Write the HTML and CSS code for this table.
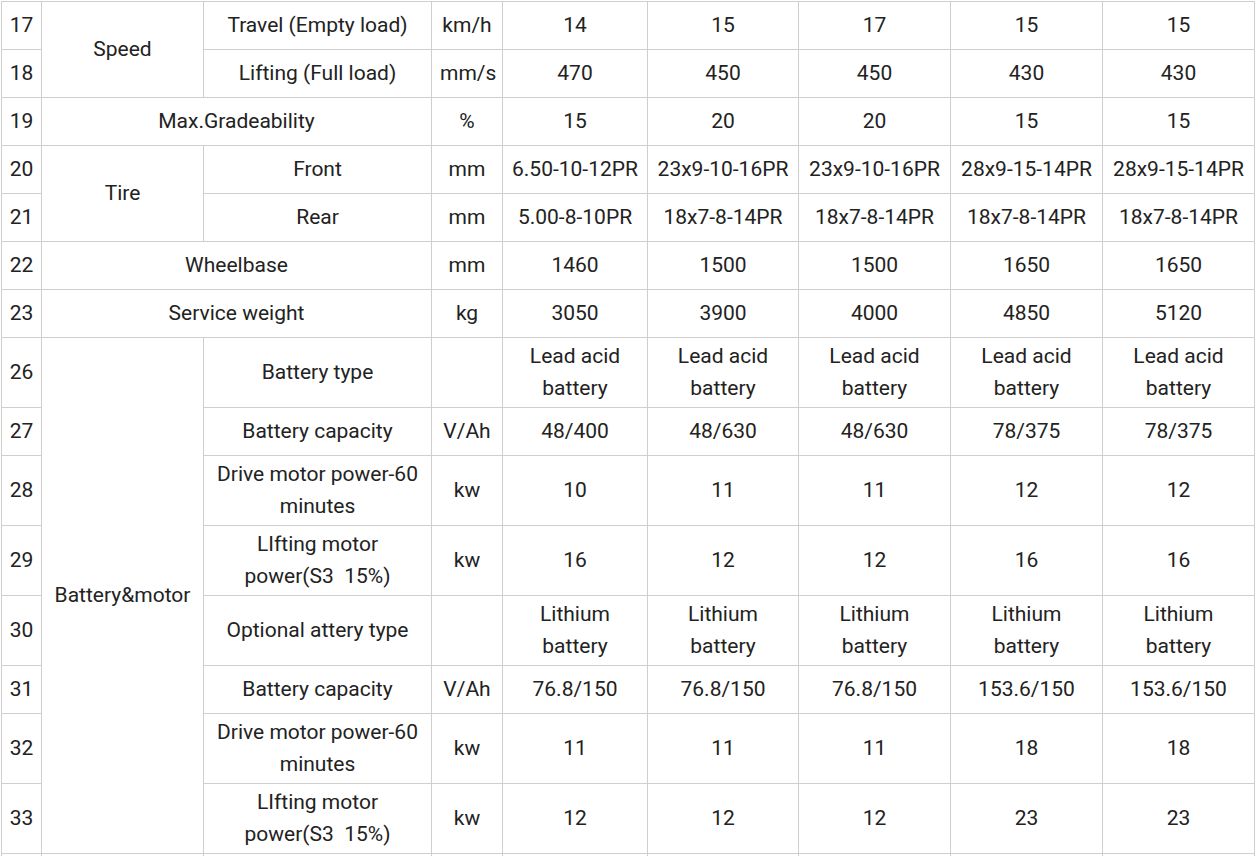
FILE: index.html
```html
<!DOCTYPE html>
<html>
<head>
<meta charset="utf-8">
<link rel="stylesheet" href="styles.css">
</head>
<body>
<table class="spec">
<colgroup>
<col class="c-no"><col class="c-grp"><col class="c-item"><col class="c-unit">
<col class="c-v1"><col class="c-v2"><col class="c-v"><col class="c-v"><col class="c-v">
</colgroup>
<tbody>
<tr><td>17</td><td rowspan="2">Speed</td><td>Travel (Empty load)</td><td>km/h</td><td>14</td><td>15</td><td>17</td><td>15</td><td>15</td></tr>
<tr><td>18</td><td>Lifting (Full load)</td><td>mm/s</td><td>470</td><td>450</td><td>450</td><td>430</td><td>430</td></tr>
<tr><td>19</td><td colspan="2">Max.Gradeability</td><td>%</td><td>15</td><td>20</td><td>20</td><td>15</td><td>15</td></tr>
<tr><td>20</td><td rowspan="2">Tire</td><td>Front</td><td>mm</td><td>6.50-10-12PR</td><td>23x9-10-16PR</td><td>23x9-10-16PR</td><td>28x9-15-14PR</td><td>28x9-15-14PR</td></tr>
<tr><td>21</td><td>Rear</td><td>mm</td><td>5.00-8-10PR</td><td>18x7-8-14PR</td><td>18x7-8-14PR</td><td>18x7-8-14PR</td><td>18x7-8-14PR</td></tr>
<tr><td>22</td><td colspan="2">Wheelbase</td><td>mm</td><td>1460</td><td>1500</td><td>1500</td><td>1650</td><td>1650</td></tr>
<tr><td>23</td><td colspan="2">Service weight</td><td>kg</td><td>3050</td><td>3900</td><td>4000</td><td>4850</td><td>5120</td></tr>
<tr><td>26</td><td rowspan="8">Battery&amp;motor</td><td>Battery type</td><td></td><td>Lead acid battery</td><td>Lead acid battery</td><td>Lead acid battery</td><td>Lead acid battery</td><td>Lead acid battery</td></tr>
<tr><td>27</td><td>Battery capacity</td><td>V/Ah</td><td>48/400</td><td>48/630</td><td>48/630</td><td>78/375</td><td>78/375</td></tr>
<tr><td>28</td><td>Drive motor power-60 minutes</td><td>kw</td><td>10</td><td>11</td><td>11</td><td>12</td><td>12</td></tr>
<tr><td>29</td><td>LIfting motor power(S3&nbsp;&nbsp;15%)</td><td>kw</td><td>16</td><td>12</td><td>12</td><td>16</td><td>16</td></tr>
<tr><td>30</td><td>Optional attery type</td><td></td><td>Lithium battery</td><td>Lithium battery</td><td>Lithium battery</td><td>Lithium battery</td><td>Lithium battery</td></tr>
<tr><td>31</td><td>Battery capacity</td><td>V/Ah</td><td>76.8/150</td><td>76.8/150</td><td>76.8/150</td><td>153.6/150</td><td>153.6/150</td></tr>
<tr><td>32</td><td>Drive motor power-60 minutes</td><td>kw</td><td>11</td><td>11</td><td>11</td><td>18</td><td>18</td></tr>
<tr><td>33</td><td>LIfting motor power(S3&nbsp;&nbsp;15%)</td><td>kw</td><td>12</td><td>12</td><td>12</td><td>23</td><td>23</td></tr>
<tr><td></td><td></td><td></td><td></td><td></td><td></td><td></td><td></td><td></td></tr>
</tbody>
</table>
</body>
</html>
```
FILE: styles.css
```css
html, body {
  margin: 0;
  padding: 0;
  background: #fff;
}
body {
  padding: 1px 0 0 1px;
  font-family: Roboto, "Liberation Sans", Arial, sans-serif;
  font-size: 21px;
  color: #222;
}
.spec {
  border-collapse: collapse;
  table-layout: fixed;
  width: 1254px;
}
.c-no { width: 40px; }
.c-grp { width: 162px; }
.c-item { width: 228px; }
.c-unit { width: 71px; }
.c-v1 { width: 145px; }
.c-v2 { width: 151px; }
.c-v { width: 152px; }
.spec td {
  border: 1px solid #cfcfcf;
  text-align: center;
  vertical-align: middle;
  line-height: 32px;
  height: 48px;
  padding: 2px 8px 3px;
  box-sizing: border-box;
}
.spec td:first-child {
  padding: 2px 0 3px;
}
```
